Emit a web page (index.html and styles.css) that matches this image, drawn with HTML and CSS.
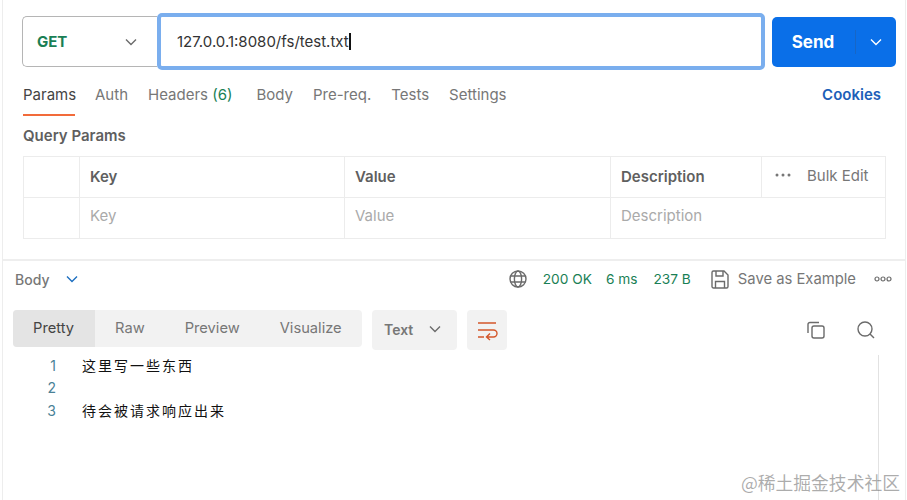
FILE: index.html
```html
<!DOCTYPE html>
<html lang="en">
<head>
  <meta charset="UTF-8" />
  <title>Postman request</title>
  <meta name="viewport" content="width=device-width, initial-scale=1.0"/>
  <link rel="stylesheet" href="styles.css">
</head>
<body>
  <div class="app">
    <div class="urlbar">
      <div class="method">
        <strong>GET</strong>
        <svg class="chev" width="12" height="8" viewBox="0 0 12 8"><path d="M1 1.5l5 5 5-5"/></svg>
      </div>
      <div class="url"><span>127.0.0.1:8080/fs/test.txt</span><i class="caret"></i></div>
      <div class="send">
        <span class="send-label">Send</span>
        <span class="send-more"><svg class="chev" width="12" height="8" viewBox="0 0 12 8"><path d="M1 1.5l5 5 5-5"/></svg></span>
      </div>
    </div>

    <div class="tabs">
      <a class="active">Params</a>
      <a>Auth</a>
      <a class="headers">Headers <em>(6)</em></a>
      <a>Body</a>
      <a>Pre-req.</a>
      <a>Tests</a>
      <a>Settings</a>
      <a class="cookies">Cookies</a>
    </div>

    <h2>Query Params</h2>
    <table class="params">
      <tr>
        <th class="check"></th>
        <th class="key">Key</th>
        <th class="value">Value</th>
        <th>
          <div class="desc-head">
            <span>Description</span>
            <div class="bulk">
              <svg width="16" height="6" viewBox="0 0 16 6"><circle cx="2" cy="3" r="1.5"/><circle cx="8" cy="3" r="1.5"/><circle cx="14" cy="3" r="1.5"/></svg>
              <span>Bulk Edit</span>
            </div>
          </div>
        </th>
      </tr>
      <tr>
        <td class="check"></td>
        <td>Key</td>
        <td>Value</td>
        <td>Description</td>
      </tr>
    </table>

    <div class="response">
      <div class="res-head">
        <span class="res-body">Body</span>
        <svg class="chev blue" width="12" height="8" viewBox="0 0 12 8"><path d="M1 1.5l5 5 5-5"/></svg>
        <div class="res-status">
          <svg class="globe" width="18" height="18" viewBox="0 0 18 18"><circle cx="9" cy="9" r="8"/><ellipse cx="9" cy="9" rx="3.6" ry="8"/><path d="M1.6 6h14.8M1.6 12h14.8"/></svg>
          <span class="ok">200 OK</span>
          <span class="ok ms">6 ms</span>
          <span class="ok size">237 B</span>
          <svg class="save" width="18" height="19" viewBox="0 0 18 19"><path d="M2.5 1h10.5l4 4v11.5a1.5 1.5 0 0 1-1.500 1.500h-13a1.500 1.500 0 0 1-1.500-1.500v-14a1.500 1.500 0 0 1 1.500-1.500z"/><path d="M5 1v5h7V1M4.500 18v-6.500h9V18"/></svg>
          <span class="save-label">Save as Example</span>
          <svg class="more" width="18" height="6" viewBox="0 0 18 6"><circle cx="3" cy="3" r="2"/><circle cx="9" cy="3" r="2"/><circle cx="15" cy="3" r="2"/></svg>
        </div>
      </div>

      <div class="res-tools">
        <div class="views">
          <a class="active">Pretty</a>
          <a>Raw</a>
          <a>Preview</a>
          <a>Visualize</a>
        </div>
        <div class="format">
          <strong>Text</strong>
          <svg class="chev" width="12" height="8" viewBox="0 0 12 8"><path d="M1 1.5l5 5 5-5"/></svg>
        </div>
        <div class="wrap">
          <svg width="20" height="18" viewBox="0 0 20 18"><path d="M1 2h18M1 9h15.500a3.500 3.500 0 0 1 0 7H10M13 12.500L9.500 16l3.500 3M1 16h6"/></svg>
        </div>
        <div class="res-icons">
          <svg width="18" height="18" viewBox="0 0 18 18"><rect x="5" y="5" width="12" height="12" rx="2"/><path d="M12 1.500H3A2 2 0 0 0 1 3.500V12"/></svg>
          <svg width="18" height="18" viewBox="0 0 18 18"><circle cx="8" cy="8" r="7"/><path d="M13 13l4 4"/></svg>
        </div>
      </div>

      <div class="code">
        <div class="line"><span class="num">1</span><span class="txt">这里写一些东西</span></div>
        <div class="line"><span class="num">2</span><span class="txt"></span></div>
        <div class="line"><span class="num">3</span><span class="txt">待会被请求响应出来</span></div>
      </div>
    </div>
  </div>
  <div class="watermark">@稀土掘金技术社区</div>
</body>
</html>
```

FILE: styles.css
```css
:root {
  --head: #5f5f5f;
  --line: #ececec;
  --green: #1a7f55;
  --blue: #0a6fe8;
  --tool: #f2f2f2;
}

* {
  box-sizing: border-box;
  margin: 0;
  padding: 0;
  font-family: Inter, 'Noto Sans CJK SC', sans-serif;
}

body {
  background: #fff;
  width: 907px;
  height: 500px;
  overflow: hidden;
  position: relative;
}

svg {
  fill: none;
  stroke: #6b6b6b;
  stroke-width: 1.4;
  flex: none;
}

.app {
  width: 904px;
  height: 500px;
  margin-left: 2px;
  border-left: 1px solid #ededed;
  border-right: 1px solid #ededed;
  overflow: hidden;
}

.urlbar {
  display: flex;
  align-items: center;
  height: 57px;
  margin-top: 13px;
  padding-left: 19px;
}

.method {
  width: 135px;
  height: 51px;
  border: 1px solid #b5b5b5;
  border-right: none;
  border-radius: 5px 0 0 5px;
  display: flex;
  align-items: center;
  justify-content: space-between;
  padding: 0 20px 0 14px;
  font-size: 15px;
  color: var(--green);
}

.url {
  width: 608px;
  height: 57px;
  border: 4px solid #7aaeee;
  border-radius: 5px;
  display: flex;
  align-items: center;
  padding-left: 16px;
  font-size: 15px;
  color: #333;
}

.caret {
  width: 2px;
  height: 17px;
  background: #111;
}

.send {
  width: 124px;
  height: 50px;
  margin-left: 7px;
  background: var(--blue);
  border-radius: 5px;
  display: flex;
  align-items: center;
  color: #fff;
  font-weight: 700;
  font-size: 17px;
}

.send-label {
  width: 83px;
  text-align: center;
  padding-right: 1px;
}

.send-more {
  flex: 1;
  height: 24px;
  border-left: 1px solid #1766c6;
  display: flex;
  align-items: center;
  justify-content: center;
}

.send-more svg {
  stroke: #fff;
}

.tabs {
  display: flex;
  align-items: flex-start;
  gap: 20px;
  height: 41px;
  margin-top: 16px;
  padding: 0 20px;
  font-size: 15px;
  color: #777;
}

.tabs a {
  height: 30px;
  line-height: 18px;
}

.tabs .active {
  width: 52px;
  color: #444;
  border-bottom: 2px solid #f26b3a;
}

.tabs em {
  font-style: normal;
  color: var(--green);
}

.tabs .headers {
  margin-right: 4px;
}

.tabs .cookies {
  margin-left: auto;
  margin-right: 4px;
  color: #1d5fb8;
  font-weight: 600;
}

h2 {
  font-size: 15px;
  font-weight: 600;
  color: var(--head);
  padding-left: 20px;
  line-height: 18px;
}

.params {
  width: 863px;
  margin: 11px 0 0 20px;
  border-collapse: collapse;
  table-layout: fixed;
  font-size: 15px;
}

.params th, .params td {
  border: 1px solid var(--line);
  height: 41px;
  text-align: left;
  padding-left: 10px;
}

.params th {
  color: var(--head);
  font-weight: 600;
  padding-bottom: 2px;
}

.params td {
  color: #aaa;
  padding-bottom: 5px;
}

.params .check {
  width: 56px;
}

.params .key {
  width: 265px;
}

.params .value {
  width: 266px;
}

.desc-head {
  display: flex;
  align-items: center;
  justify-content: space-between;
  height: 38px;
}

.bulk {
  display: flex;
  align-items: center;
  gap: 16px;
  width: 124px;
  height: 40px;
  margin-top: 2px;
  padding: 0 0 4px 13px;
  border-left: 1px solid var(--line);
  color: #777;
  font-weight: 400;
  font-size: 15px;
}

.bulk svg {
  fill: #777;
  stroke: none;
}

.response {
  margin-top: 20px;
  border-top: 2px solid #eee;
}

.res-head {
  display: flex;
  align-items: center;
  height: 38px;
  padding: 0 0 2px 12px;
  font-size: 13.700px;
  color: #777;
}

.res-body {
  font-size: 14px;
  font-weight: 500;
  margin-right: 17px;
}

.chev.blue {
  stroke: #1d6fc0;
}

.res-status {
  display: flex;
  align-items: center;
  margin-left: auto;
  padding-right: 13px;
}

.globe {
  margin-right: 16px;
}

.ok {
  color: var(--green);
}

.ms {
  margin-left: 14px;
}

.size {
  margin-left: 16px;
}

.save {
  margin: 0 9px 0 20px;
}

.save-label {
  font-size: 14.800px;
}

.more {
  margin-left: 18px;
  stroke-width: 1.2;
}

.res-tools {
  display: flex;
  align-items: flex-start;
  margin-top: 11px;
  padding-left: 10px;
  font-size: 14.700px;
  color: #777;
}

.views {
  display: flex;
  width: 349px;
  height: 37px;
  background: var(--tool);
  border-radius: 4px;
  line-height: 37px;
}

.views a {
  padding: 0 20px;
}

.views .active {
  width: 82px;
  background: #e4e4e4;
  border-radius: 4px 0 0 4px;
  color: #444;
}

.format {
  display: flex;
  align-items: center;
  justify-content: space-between;
  width: 85px;
  height: 40px;
  margin-left: 10px;
  padding: 0 16px 2px 12px;
  background: var(--tool);
  border-radius: 4px;
  font-size: 14px;
}

.format strong {
  font-weight: 600;
}

.wrap {
  display: flex;
  align-items: center;
  justify-content: center;
  width: 40px;
  height: 40px;
  margin-left: 10px;
  background: var(--tool);
  border-radius: 4px;
}

.wrap svg {
  stroke: #d4572b;
  overflow: visible;
}

.res-icons {
  display: flex;
  align-items: center;
  gap: 32px;
  height: 40px;
  margin-left: auto;
  padding-right: 30px;
}

.code {
  width: 876px;
  height: 145px;
  margin-top: 5px;
  border-right: 1px solid #e2e2e2;
}

.line {
  display: flex;
  align-items: center;
  height: 22.500px;
  padding-bottom: 2px;
}

.num {
  width: 53px;
  text-align: right;
  font-size: 14px;
  color: #4a8296;
}

.txt {
  margin-left: 26px;
  font-size: 14px;
  letter-spacing: 2px;
  color: #111;
}

.watermark {
  position: absolute;
  right: 7px;
  bottom: 5px;
  font-size: 17.800px;
  color: rgba(90, 90, 90, 0.5);
  font-family: 'Noto Sans CJK SC', sans-serif;
}
```
